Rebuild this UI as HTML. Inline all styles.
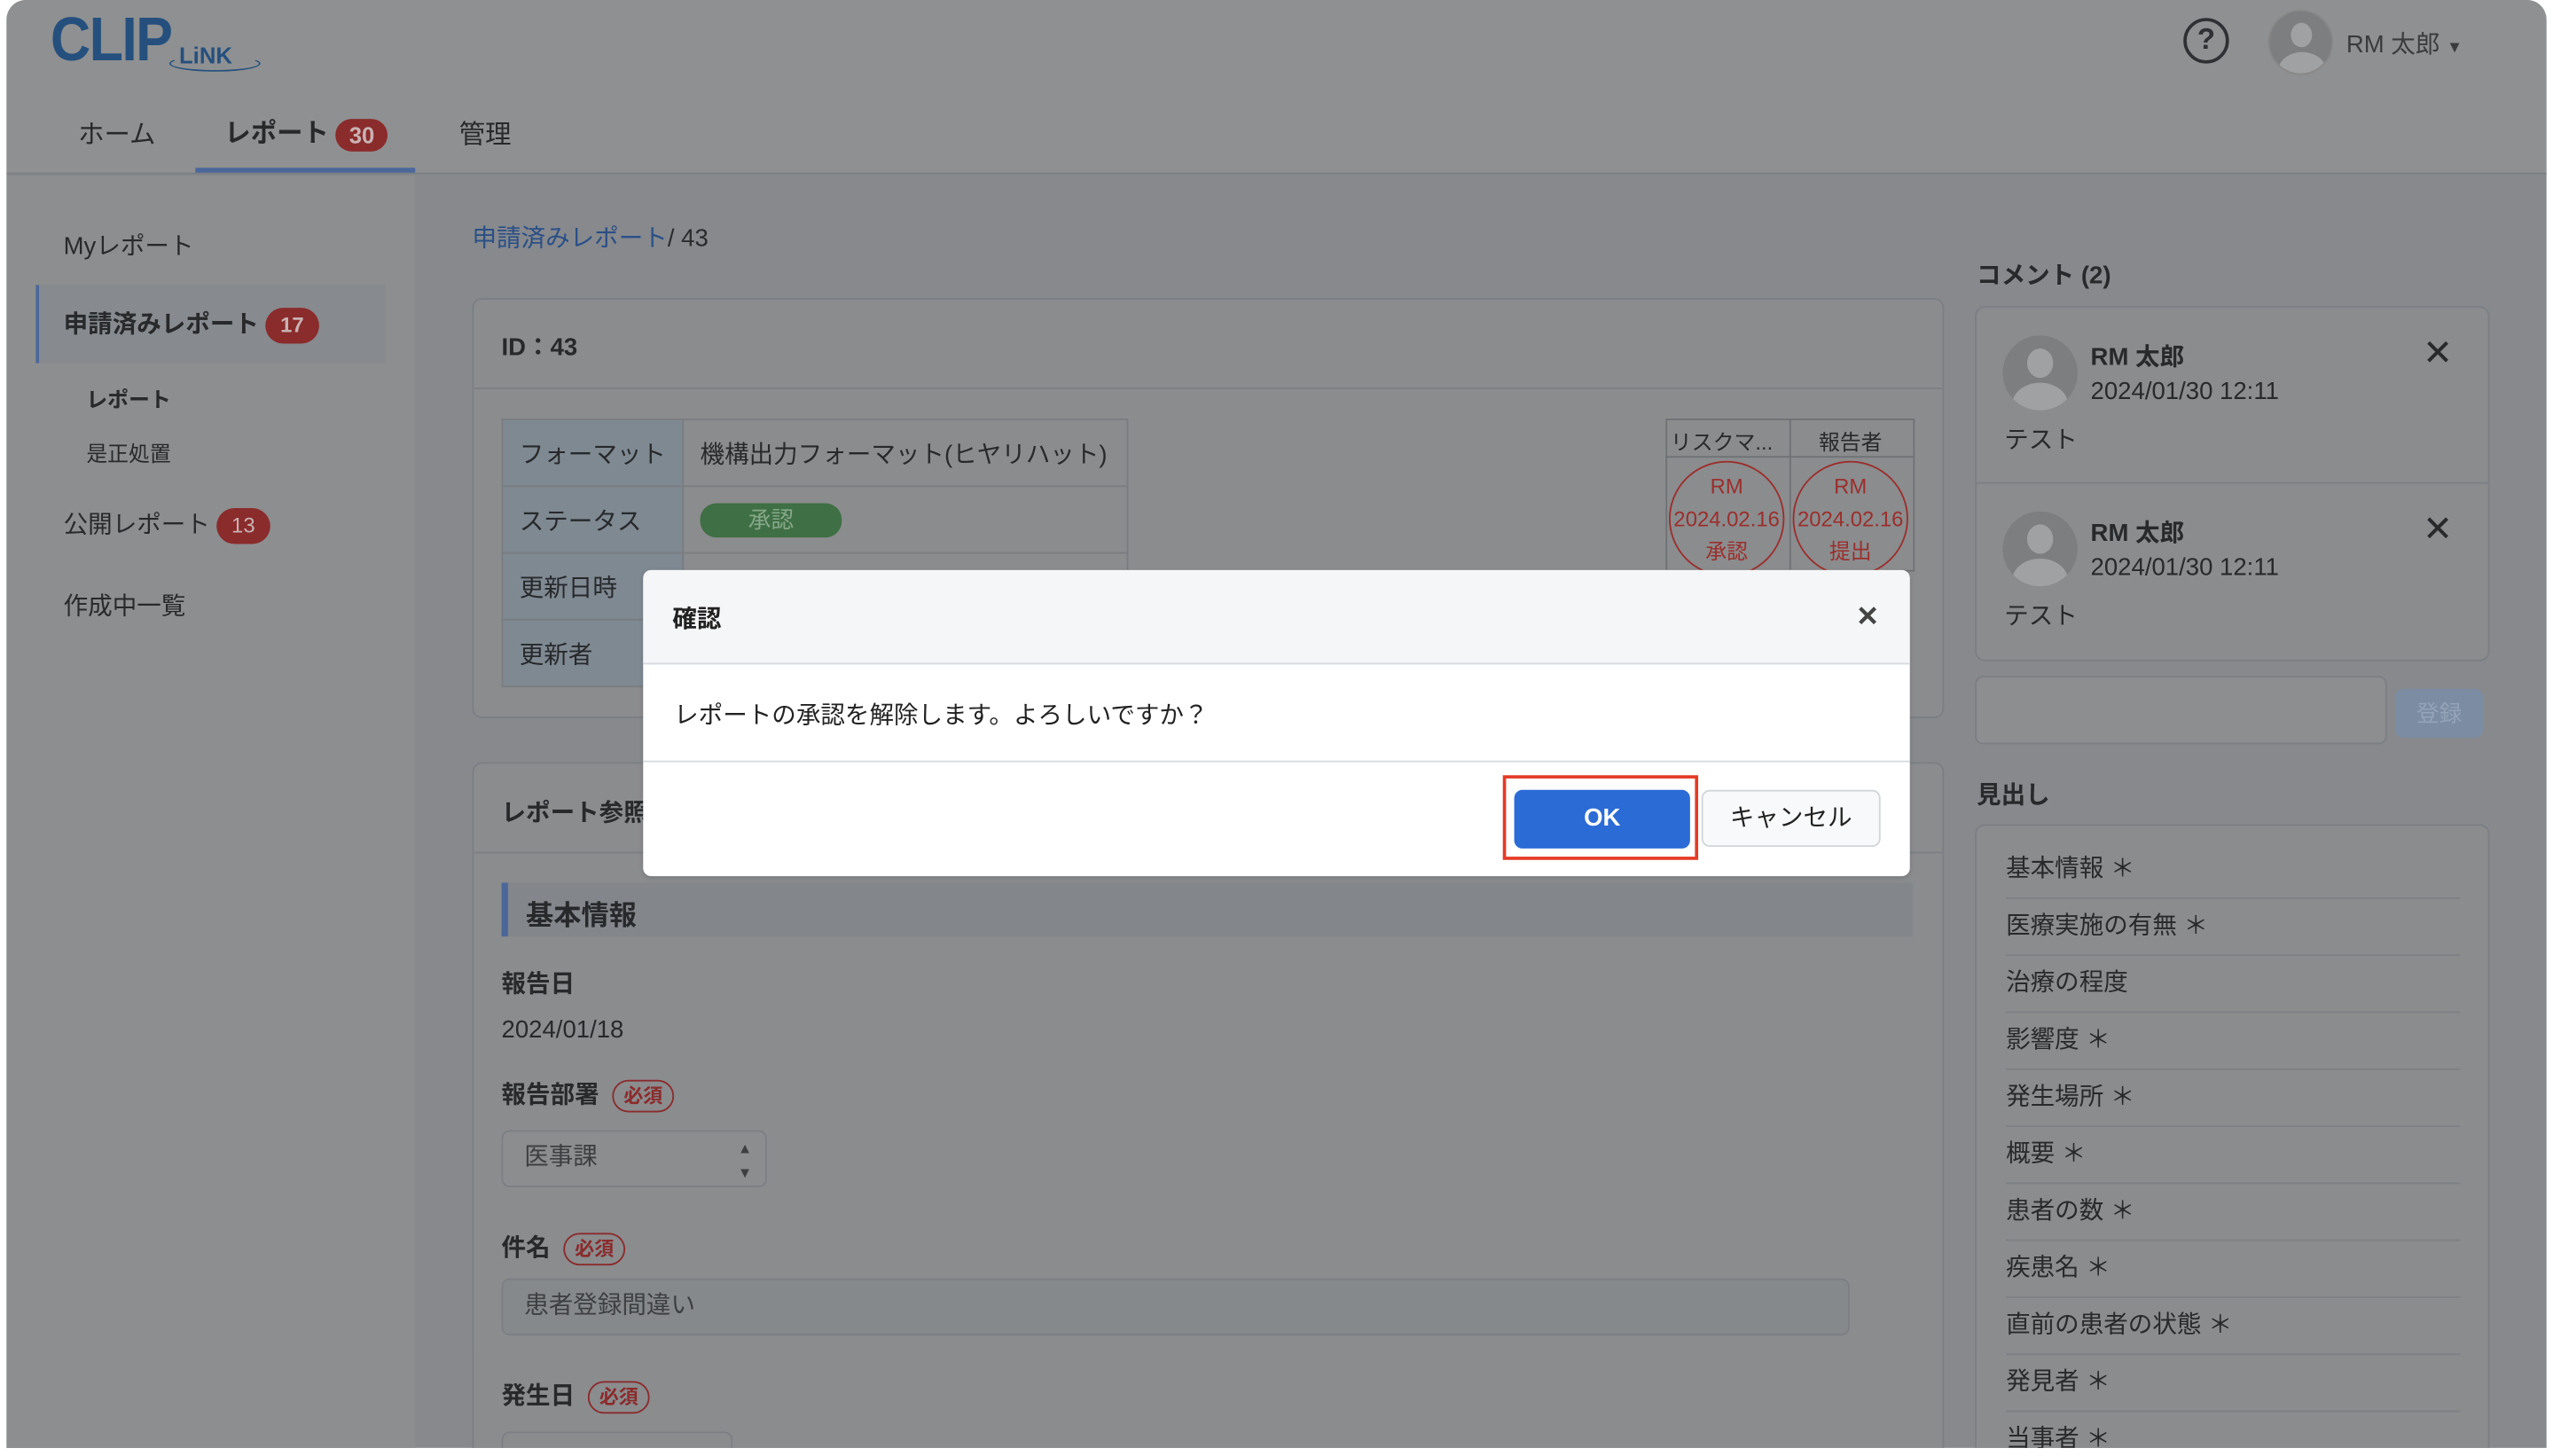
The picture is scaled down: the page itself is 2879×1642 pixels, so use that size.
<!DOCTYPE html>
<html><head><meta charset="utf-8">
<style>
*{box-sizing:border-box;margin:0;padding:0}
html,body{width:2879px;height:1642px;overflow:hidden;background:#fff}
body{font-family:"Liberation Sans","Noto Sans CJK JP",sans-serif;color:#27292b}
#w{position:absolute;left:0;top:0;width:1568px;height:894px;transform:scale(1.8361,1.8367);transform-origin:0 0;overflow:hidden;background:#fff}
.a{position:absolute}
#win{position:absolute;left:4px;top:0;width:1560px;height:889px;background:#87898d;border-radius:12px 12px 0 0;overflow:hidden}
#hdr{position:absolute;left:0;top:0;width:1560px;height:107px;background:#8f9091;border-bottom:1.5px solid #7b7e82}
#side{position:absolute;left:0;top:108px;width:251px;height:790px;background:#8d8e8f}
.badge{display:inline-block;background:#8a2b2c;color:#c9b3b3;border-radius:12px;font-size:13px;padding:3px 9px;line-height:16px;vertical-align:middle}
.card{position:absolute;border:1.5px solid #7b7f84;border-radius:6px;background:#8b8c8e}
td{border:1px solid #7a7d80;font-size:15px;padding:0 10px;height:41px}
.lab{background:#7f8992}
.req{display:inline-block;border:1.5px solid #8a2b2c;color:#8a2b2c;border-radius:11px;font-size:12px;padding:2px 6px;margin-left:8px;vertical-align:middle;line-height:14px}
.hl{position:absolute;left:18px;width:279px;font-size:15px;border-bottom:1px solid #7d8084;height:35px;line-height:34px}
</style></head><body><div id="w">
<div id="win">
<div id="hdr">
 <div class="a" style="left:27px;top:4px;font-size:38px;font-weight:bold;color:#25507e;letter-spacing:-1px;transform:scaleX(0.9);transform-origin:0 0">CLIP</div>
 <div class="a" style="left:106px;top:26px;font-size:14px;font-weight:bold;color:#25507e">LiNK</div>
 <div class="a" style="left:100px;top:34px;width:56px;height:10px;border:1.5px solid #25507e;border-radius:50%;border-top-color:transparent"></div>
 <div class="a" style="left:44px;top:69px;font-size:16px">ホーム</div>
 <div class="a" style="left:134px;top:68px;font-size:16px;font-weight:bold">レポート <span class="badge" style="font-size:14px;padding:2px 8px">30</span></div>
 <div class="a" style="left:116px;top:103px;width:135px;height:3px;background:#4b679a"></div>
 <div class="a" style="left:278px;top:69px;font-size:16px">管理</div>
 <div class="a" style="left:1337px;top:11px;width:28px;height:28px;border:2.5px solid #2e3033;border-radius:50%;text-align:center;font-weight:bold;font-size:18px;line-height:23px;color:#2e3033">?</div>
 <div class="a" style="left:1389px;top:6px;width:40px;height:40px;border-radius:50%;background:#7d7e80;overflow:hidden;border:1px solid #888">
  <div class="a" style="left:13px;top:7px;width:13px;height:15px;border-radius:50%;background:#a0a1a2"></div>
  <div class="a" style="left:5px;top:25px;width:30px;height:24px;border-radius:50%;background:#a0a1a2"></div></div>
 <div class="a" style="left:1437px;top:16px;font-size:15px;color:#3a3b3d">RM 太郎 <span style="font-size:10px">▼</span></div>
</div>
<div id="side">
 <div class="a" style="left:35px;top:32px;font-size:15px">Myレポート</div>
 <div class="a" style="left:18px;top:67px;width:215px;height:48px;background:#878a8e;border-left:2px solid #4b679a"></div>
 <div class="a" style="left:35px;top:80px;font-size:15px;font-weight:bold">申請済みレポート <span class="badge">17</span></div>
 <div class="a" style="left:49px;top:127px;font-size:13px;font-weight:bold">レポート</div>
 <div class="a" style="left:49px;top:160px;font-size:13px">是正処置</div>
 <div class="a" style="left:35px;top:203px;font-size:15px">公開レポート <span class="badge">13</span></div>
 <div class="a" style="left:35px;top:253px;font-size:15px">作成中一覧</div>
</div>
<div class="a" style="left:286px;top:135px;font-size:15px;color:#2a4f86">申請済みレポート<span style="color:#2a2b2c">/ 43</span></div>
<div class="card" style="left:286px;top:183px;width:904px;height:258px">
 <div class="a" style="left:17px;top:18px;font-size:15px;font-weight:bold">ID：43</div>
 <div class="a" style="left:0;top:54px;width:902px;border-top:1.5px solid #7b7f84"></div>
 <table class="a" style="left:17px;top:73px;width:385px;border-collapse:collapse">
  <tr><td class="lab" style="width:111px">フォーマット</td><td>機構出力フォーマット(ヒヤリハット)</td></tr>
  <tr><td class="lab">ステータス</td><td><span style="display:inline-block;background:#3f6f45;color:#86a888;border-radius:10px;width:87px;text-align:center;font-size:14px;line-height:21px">承認</span></td></tr>
  <tr><td class="lab">更新日時</td><td></td></tr>
  <tr><td class="lab">更新者</td><td></td></tr>
 </table>
 <div class="a" style="left:732px;top:73px;width:153px;height:94px;border:1px solid #6f7275"></div>
 <div class="a" style="left:808px;top:73px;height:94px;border-left:1px solid #6f7275"></div>
 <div class="a" style="left:732px;top:96px;width:153px;border-top:1px solid #6f7275"></div>
 <div class="a" style="left:735px;top:77px;font-size:13px">リスクマ...</div>
 <div class="a" style="left:826px;top:77px;font-size:13px">報告者</div>
 <div class="a" style="left:734px;top:99px;width:71px;height:71px;border:1.5px solid #9a2f2c;border-radius:50%;color:#9a2f2c;text-align:center;font-size:13px;line-height:20px;padding-top:5px">RM<br>2024.02.16<br>承認</div>
 <div class="a" style="left:810px;top:99px;width:71px;height:71px;border:1.5px solid #9a2f2c;border-radius:50%;color:#9a2f2c;text-align:center;font-size:13px;line-height:20px;padding-top:5px">RM<br>2024.02.16<br>提出</div>
</div>
<div class="card" style="left:286px;top:468px;width:904px;height:440px">
 <div class="a" style="left:17px;top:19px;font-size:15px;font-weight:bold">レポート参照</div>
 <div class="a" style="left:0;top:54px;width:902px;border-top:1.5px solid #7b7f84"></div>
 <div class="a" style="left:17px;top:73px;width:867px;height:33px;background:#83878c;border-left:4px solid #4b679a"></div>
 <div class="a" style="left:32px;top:79px;font-size:17px;font-weight:bold">基本情報</div>
 <div class="a" style="left:17px;top:124px;font-size:15px;font-weight:bold">報告日</div>
 <div class="a" style="left:17px;top:155px;font-size:15px">2024/01/18</div>
 <div class="a" style="left:17px;top:192px;font-size:15px;font-weight:bold">報告部署<span class="req">必須</span></div>
 <div class="a" style="left:17px;top:225px;width:163px;height:35px;border:1.5px solid #7b7f84;border-radius:5px;background:#8c8d8f;font-size:15px;line-height:32px;padding-left:13px;color:#3d3f41">医事課<span style="position:absolute;right:8px;top:0;font-size:9px;line-height:16px;padding-top:2px">▲<br></span><span style="position:absolute;right:8px;top:9px;font-size:9px">▼</span></div>
 <div class="a" style="left:17px;top:286px;font-size:15px;font-weight:bold">件名<span class="req">必須</span></div>
 <div class="a" style="left:17px;top:316px;width:828px;height:35px;border:1.5px solid #7b7f84;border-radius:5px;background:#86898c;font-size:15px;line-height:32px;padding-left:13px;color:#3d3f41">患者登録間違い</div>
 <div class="a" style="left:17px;top:377px;font-size:15px;font-weight:bold">発生日<span class="req">必須</span></div>
 <div class="a" style="left:17px;top:410px;width:142px;height:35px;border:1.5px solid #7b7f84;border-radius:5px"></div>
</div>
<div class="a" style="left:1210px;top:158px;font-size:15px;font-weight:bold">コメント (2)</div>
<div class="card" style="left:1209px;top:188px;width:316px;height:218px">
 <div class="a" style="left:16px;top:17px;width:46px;height:46px;border-radius:50%;background:#7d7e80;overflow:hidden"><div class="a" style="left:15px;top:8px;width:16px;height:18px;border-radius:50%;background:#a0a1a2"></div><div class="a" style="left:6px;top:29px;width:34px;height:26px;border-radius:50%;background:#a0a1a2"></div></div>
 <div class="a" style="left:70px;top:19px;font-size:15px;font-weight:bold">RM 太郎</div>
 <div class="a" style="left:70px;top:43px;font-size:15px">2024/01/30 12:11</div>
 <div class="a" style="left:274px;top:15px;font-size:22px">✕</div>
 <div class="a" style="left:17px;top:70px;font-size:15px">テスト</div>
 <div class="a" style="left:0;top:107px;width:314px;border-top:1.5px solid #7b7f84"></div>
 <div class="a" style="left:16px;top:125px;width:46px;height:46px;border-radius:50%;background:#7d7e80;overflow:hidden"><div class="a" style="left:15px;top:8px;width:16px;height:18px;border-radius:50%;background:#a0a1a2"></div><div class="a" style="left:6px;top:29px;width:34px;height:26px;border-radius:50%;background:#a0a1a2"></div></div>
 <div class="a" style="left:70px;top:127px;font-size:15px;font-weight:bold">RM 太郎</div>
 <div class="a" style="left:70px;top:151px;font-size:15px">2024/01/30 12:11</div>
 <div class="a" style="left:274px;top:123px;font-size:22px">✕</div>
 <div class="a" style="left:17px;top:178px;font-size:15px">テスト</div>
</div>
<div class="a" style="left:1209px;top:415px;width:253px;height:42px;border:1.5px solid #7b7f84;border-radius:5px;background:#8d8e90"></div>
<div class="a" style="left:1467px;top:423px;width:54px;height:30px;border-radius:5px;background:#7c8ca2;color:#94a3b8;font-size:14px;text-align:center;line-height:30px">登録</div>
<div class="a" style="left:1210px;top:477px;font-size:15px;font-weight:bold">見出し</div>
<div class="card" style="left:1209px;top:506px;width:316px;height:400px">
 <div class="hl" style="top:10px">基本情報 ＊</div>
 <div class="hl" style="top:45px">医療実施の有無 ＊</div>
 <div class="hl" style="top:80px">治療の程度</div>
 <div class="hl" style="top:115px">影響度 ＊</div>
 <div class="hl" style="top:150px">発生場所 ＊</div>
 <div class="hl" style="top:185px">概要 ＊</div>
 <div class="hl" style="top:220px">患者の数 ＊</div>
 <div class="hl" style="top:255px">疾患名 ＊</div>
 <div class="hl" style="top:290px">直前の患者の状態 ＊</div>
 <div class="hl" style="top:325px">発見者 ＊</div>
 <div class="hl" style="top:360px">当事者 ＊</div>
</div>
</div>
<div class="a" style="left:395px;top:350px;width:778px;height:188px;background:#fff;border-radius:5px;overflow:hidden;box-shadow:0 1px 3px rgba(0,0,0,.15)">
 <div class="a" style="left:0;top:0;width:778px;height:58px;background:#f5f6f8;border-bottom:1.5px solid #d6d9dd"></div>
 <div class="a" style="left:18px;top:19px;font-size:15px;font-weight:bold;color:#222">確認</div>
 <div class="a" style="left:745px;top:19px;font-size:17px;font-weight:bold;color:#444">✕</div>
 <div class="a" style="left:19px;top:78px;font-size:15px;color:#222">レポートの承認を解除します。よろしいですか？</div>
 <div class="a" style="left:0;top:117px;width:778px;border-top:1.5px solid #d6d9dd"></div>
 <div class="a" style="left:528px;top:126px;width:120px;height:52px;border:2px solid #e53a26"></div>
 <div class="a" style="left:535px;top:135px;width:108px;height:36px;background:#2b6bd6;border-radius:5px;color:#fff;font-size:15px;font-weight:bold;text-align:center;line-height:36px">OK</div>
 <div class="a" style="left:650px;top:135px;width:110px;height:35px;border:1.5px solid #d2d5d9;border-radius:5px;background:#f8f9fa;color:#222;font-size:15px;text-align:center;line-height:33px">キャンセル</div>
</div>
</div></body></html>
